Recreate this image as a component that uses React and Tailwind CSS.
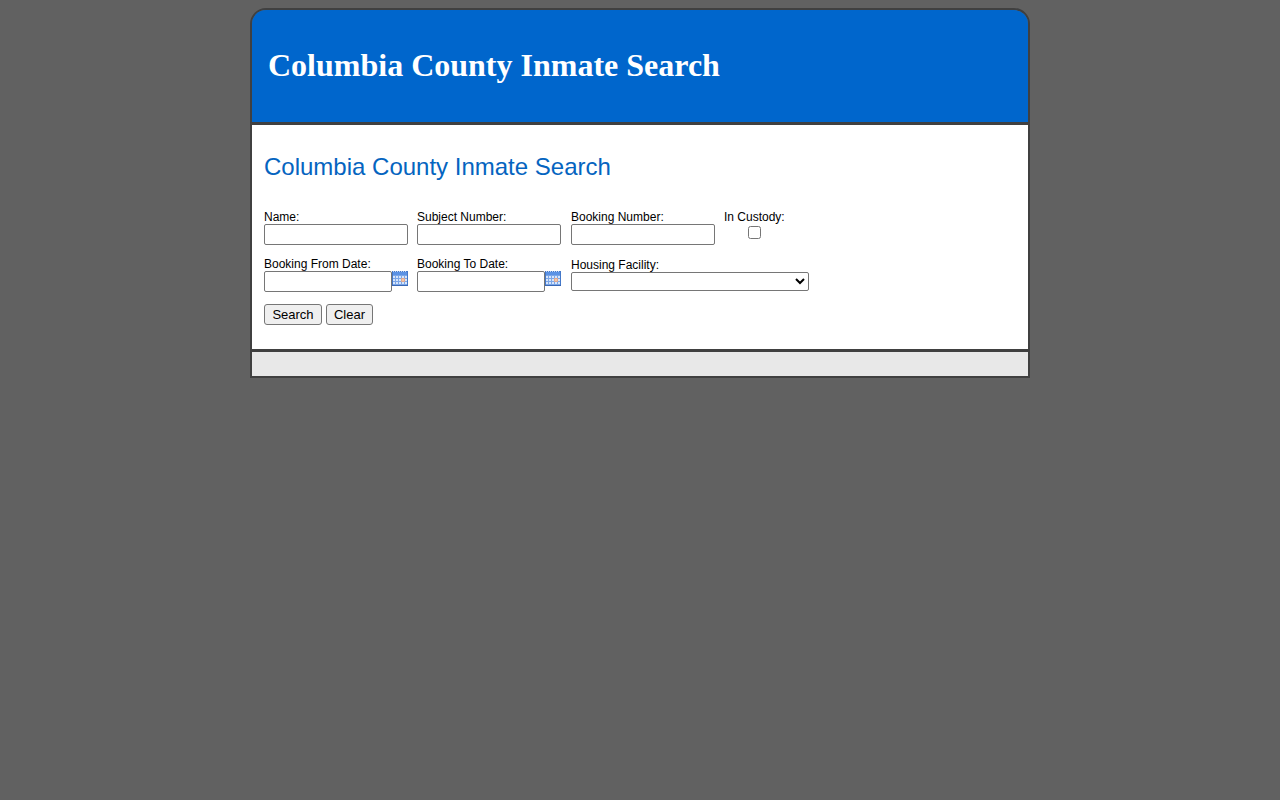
const fieldClass =
  'h-[21px] min-w-0 rounded-[2px] border border-[#767676] bg-white px-1 text-[13px]';
const buttonClass =
  'h-[21px] rounded-[3px] border border-[#767676] bg-[#efefef] text-[13px] leading-4 text-black hover:bg-[#e5e5e5]';

function CalendarIcon() {
  const columns = [1, 4, 7, 10, 13];
  const rows = [5, 8, 11];
  return (
    <svg width="16" height="15" viewBox="0 0 16 15" shapeRendering="crispEdges" aria-hidden="true">
      <rect width="16" height="15" fill="#4478c9" />
      <rect x="1" y="1" width="14" height="3" fill="#5b92e4" />
      <rect x="1" y="4" width="14" height="10" fill="#7ba6e8" />
      {[1, 3, 5, 7, 9, 11, 13].map((x) => (
        <rect key={x} x={x} y="0" width="1" height="1" fill="#c3d7f5" />
      ))}
      {rows.map((y) =>
        columns.map((x) => (
          <rect key={`${x}-${y}`} x={x} y={y} width="2" height="2" fill="#d6e5fa" />
        )),
      )}
      <rect x="9" y="7" width="4" height="4" fill="#dba894" />
      <rect x="10" y="8" width="2" height="2" fill="#f8c8a0" />
      <rect y="14" width="16" height="1" fill="#3a68b4" />
    </svg>
  );
}

function TextField({ id, label }) {
  return (
    <div className="flex w-36 flex-col">
      <label htmlFor={id}>{label}</label>
      <input id={id} type="text" className={fieldClass} />
    </div>
  );
}

function DateField({ id, label }) {
  return (
    <div className="flex w-36 flex-col">
      <label htmlFor={id}>{label}</label>
      <div className="flex items-start">
        <input id={id} type="text" className={`${fieldClass} flex-1`} />
        <button type="button" aria-label={`Choose ${label}`} className="cursor-pointer">
          <CalendarIcon />
        </button>
      </div>
    </div>
  );
}

export default function App() {
  return (
    <div className="min-h-screen bg-[#616161] py-2 font-['Liberation_Sans',Arial,sans-serif] text-black">
      <div className="mx-auto max-w-[780px] rounded-t-2xl border-2 border-[#404040]">
        <header className="rounded-t-[14px] bg-[#0066cc] px-4 pt-[37px] pb-[39px]">
          <h1 className="font-['Liberation_Serif','Times_New_Roman',serif] text-[32px] leading-9 font-bold text-white">
            Columbia County Inmate Search
          </h1>
        </header>

        <main className="border-y-[3px] border-[#404040] bg-white px-3 pt-7 pb-6">
          <h2 className="text-2xl leading-7 text-[#0564c0]">Columbia County Inmate Search</h2>

          <form className="mt-[29px] text-xs leading-[14px]" onSubmit={(e) => e.preventDefault()}>
            <div className="grid grid-cols-[144px_145px_144px_auto] items-center justify-start gap-x-[9px] gap-y-3">
              <TextField id="name" label="Name:" />
              <TextField id="subject-number" label="Subject Number:" />
              <TextField id="booking-number" label="Booking Number:" />
              <div className="flex flex-col items-center gap-0.5 self-start justify-self-start">
                <label htmlFor="in-custody">In Custody:</label>
                <input id="in-custody" type="checkbox" className="size-[13px]" />
              </div>

              <DateField id="booking-from" label="Booking From Date:" />
              <DateField id="booking-to" label="Booking To Date:" />
              <div className="col-span-2 flex w-[238px] flex-col">
                <label htmlFor="facility">Housing Facility:</label>
                <select
                  id="facility"
                  className="h-[19px] rounded-[2px] border border-[#767676] bg-white text-[13px]"
                >
                  <option value=""></option>
                </select>
              </div>
            </div>

            <div className="mt-3 flex gap-1">
              <button type="submit" className={`${buttonClass} w-[58px]`}>
                Search
              </button>
              <button type="reset" className={`${buttonClass} w-[47px]`}>
                Clear
              </button>
            </div>
          </form>
        </main>

        <footer className="h-6 bg-[#e8e8e8]" />
      </div>
    </div>
  );
}
